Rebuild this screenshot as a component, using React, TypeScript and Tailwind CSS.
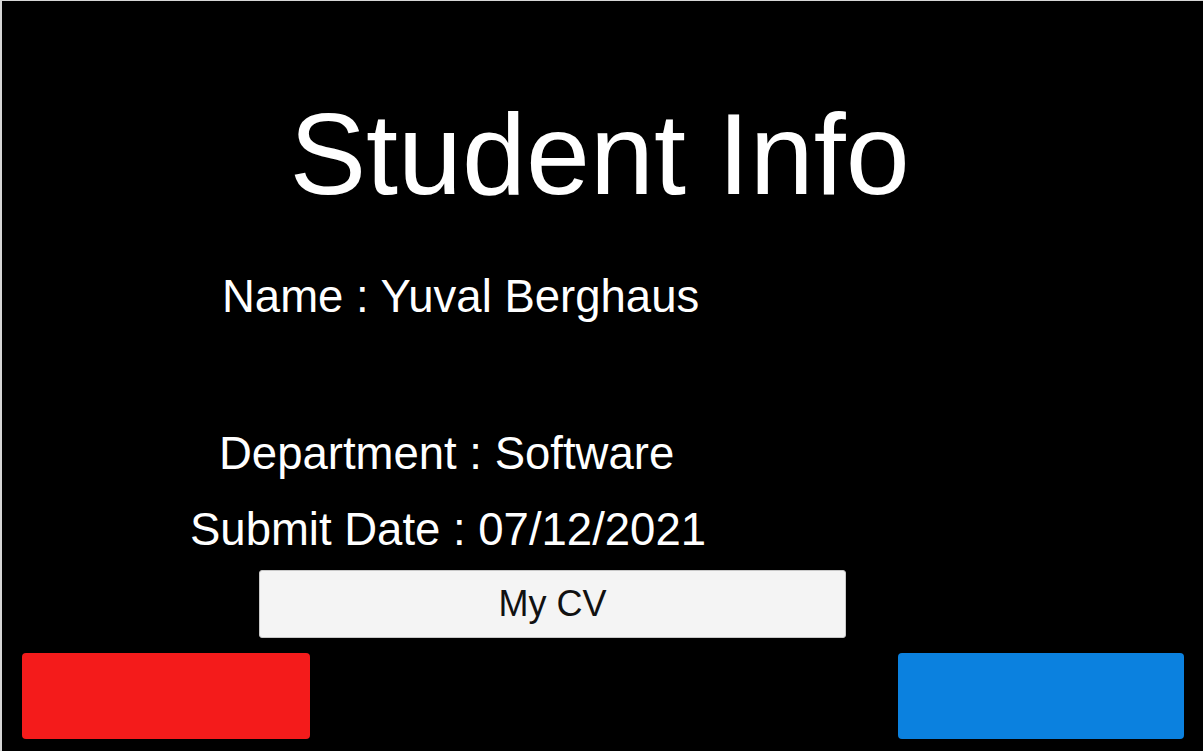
export default function App() {
  return (
    <div
      className="w-[1203px] h-[751px] bg-black border-t border-l-2 border-[#d6d6d6] flex flex-col overflow-hidden text-white"
      style={{ fontFamily: '"Liberation Sans", Arial, sans-serif' }}
    >
      <h1 className="mt-[96px] pr-[6px] text-center text-[115px] leading-none font-normal">Student Info</h1>

      <div className="mt-[62px] ml-[220px] text-[45.5px] leading-none">Name : Yuval Berghaus</div>
      <div className="mt-[111px] ml-[217px] text-[45.5px] leading-none">Department : Software</div>
      <div className="mt-[31px] ml-[188px] text-[45.5px] leading-none">Submit Date : 07/12/2021</div>

      <button className="mt-[17px] ml-[257px] w-[587px] h-[68px] rounded-[3px] bg-[#f4f4f4] border border-[#c8c8c8] text-[36px] text-[#111] leading-none">
        My CV
      </button>

      <div className="mt-[15px] flex justify-between pl-[20px] pr-[19px]">
        <button className="w-[288px] h-[86px] rounded-[4px] bg-[#f41b1b]" />
        <button className="w-[286px] h-[86px] rounded-[4px] bg-[#0b81df]" />
      </div>
    </div>
  );
}
